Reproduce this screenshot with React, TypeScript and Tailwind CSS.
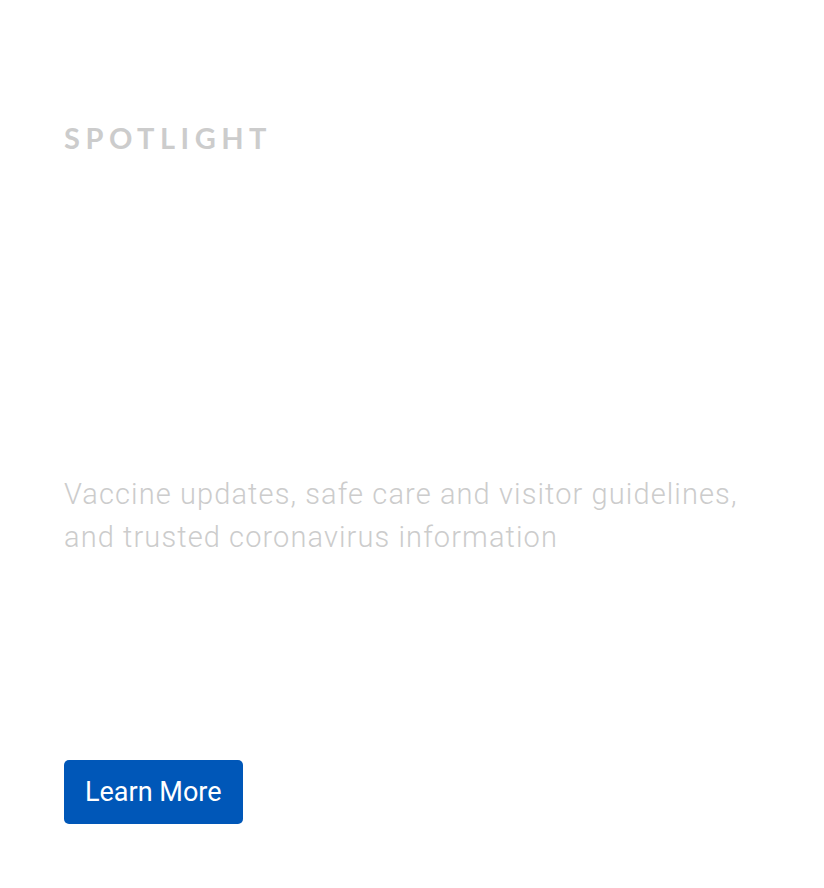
export default function App() {
  return (
    <main className="flex h-[888px] w-full flex-col bg-white px-16 pt-[118px]">
      <h2 className="font-['Lato',sans-serif] text-[29px] font-bold leading-[40px] tracking-[0.19em] text-[#cccccc]">
        SPOTLIGHT
      </h2>
      <p className="mt-[315px] max-w-[700px] font-['Roboto',sans-serif] text-[29px] font-light leading-[43px] tracking-[1.1px] text-[#cccccc]">
        Vaccine updates, safe care and visitor guidelines, and trusted coronavirus information
      </p>
      <div className="mt-auto pb-16">
        <button className="h-16 rounded-[5px] bg-[#0057b8] px-[21px] font-['Roboto',sans-serif] text-[27px] text-white">
          Learn More
        </button>
      </div>
    </main>
  );
}
